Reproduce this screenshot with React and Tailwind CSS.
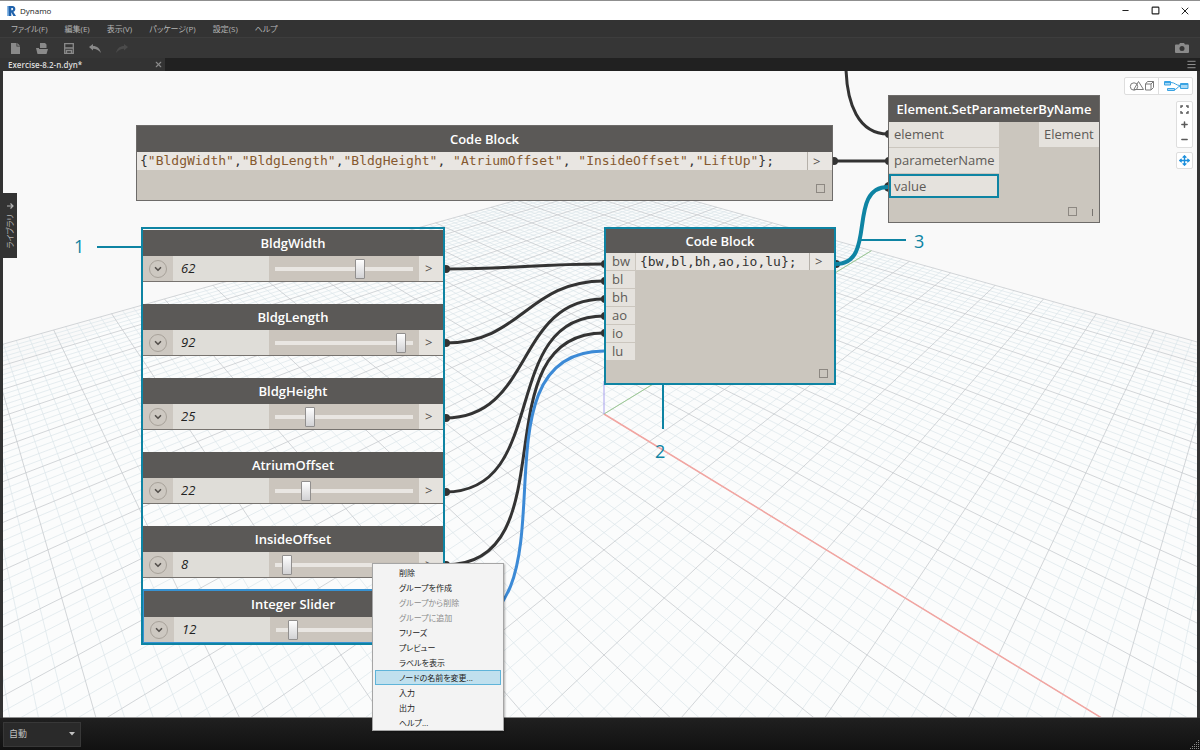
import React from 'react';
import { ChevronDown, Menu, Minus, Move, Plus, Square, X } from 'lucide-react';

const MENUS = ['ファイル(F)', '編集(E)', '表示(V)', 'パッケージ(P)', '設定(S)', 'ヘルプ'];

const SLIDERS = [
  { name: 'BldgWidth', value: 62 },
  { name: 'BldgLength', value: 92 },
  { name: 'BldgHeight', value: 25 },
  { name: 'AtriumOffset', value: 22 },
  { name: 'InsideOffset', value: 8 },
];

const CONTEXT_MENU = [
  { label: '削除' },
  { label: 'グループを作成' },
  { label: 'グループから削除', disabled: true },
  { label: 'グループに追加', disabled: true },
  { label: 'フリーズ' },
  { label: 'プレビュー' },
  { label: 'ラベルを表示' },
  { label: 'ノードの名前を変更...', active: true },
  { label: '入力' },
  { label: '出力' },
  { label: 'ヘルプ...' },
];

const INPUTS = ['bw', 'bl', 'bh', 'ao', 'io', 'lu'];
const PARAMS = ['BldgWidth', 'BldgLength', 'BldgHeight', 'AtriumOffset', 'InsideOffset', 'LiftUp'];

// Ground plane, u along the red axis and v along the green one
const ORIGIN = { x: 601, y: 343 };
const depth = (u, v) => 1 - 0.05894 * (u - v);
const project = (u, v) => {
  const w = depth(u, v);
  return `${(ORIGIN.x + (42.5 * (u + v)) / w).toFixed(1)} ${(ORIGIN.y + (25.96 * (u - v)) / w).toFixed(1)}`;
};

const gridPath = (major) => {
  let d = '';
  for (let i = -50; i <= 50; i++) {
    if ((i % 5 === 0) !== major) continue;
    const c = i / 5;
    // stop before the camera plane
    d += `M${project(-10, c)}L${project(Math.min(10, 14.5 + c), c)}`;
    d += `M${project(c, 10)}L${project(c, Math.max(-10, c - 14.5))}`;
  }
  return d;
};

const wire = (x1, y1, x2, y2) => {
  const k = 0.45 * Math.hypot(x2 - x1, y2 - y1);
  return `M${x1} ${y1}C${x1 + k} ${y1} ${x2 - k} ${y2} ${x2} ${y2}`;
};

const WIRES = [
  [442, 198, 601, 193],
  [442, 272, 601, 210],
  [442, 347, 601, 228],
  [442, 421, 601, 245],
  [442, 494, 601, 262],
  [830, 90, 885, 90],
];

const Scene = () => (
  <svg className="absolute inset-0 w-full h-full" fill="none" aria-hidden="true">
    <path d={`M${project(-10, 10)}L${project(4, 10)}L${project(8, 8)}L${project(8, -6)}L${project(6, -8)}L${project(-8, -8)}L${project(-10, -4)}Z`} fill="#fbfcfc" />
    <path d={gridPath(false)} stroke="#dbe5ea" strokeWidth="1" strokeOpacity="0.7" />
    <path d={gridPath(true)} stroke="#c4c8cc" strokeWidth="1" strokeOpacity="0.75" />
    <path d={`M${project(0, 0)}L${project(9, 0)}`} stroke="#f2a5a1" strokeWidth="1.5" />
    <path d={`M${project(0, 0)}L${project(0, 10)}`} stroke="#9ccb94" strokeWidth="1" />
    <path d="M601 343V310" stroke="#a8a0ee" strokeWidth="1" />

    <g stroke="#333333" strokeWidth="3">
      {WIRES.map((w) => (
        <path key={w.join()} d={wire(...w)} />
      ))}
      <path d="M843 -2C844 32 855 63 885 63" />
    </g>
    <path d={wire(442, 559, 601, 280)} stroke="#3c8ad6" strokeWidth="3" />
    <g fill="#333333">
      {WIRES.map(([x1, y1, x2, y2]) => (
        <React.Fragment key={`${x1}-${y1}-${y2}`}>
          <circle cx={x1 + 1} cy={y1} r="4" />
          <circle cx={x2 + 1} cy={y2} r="4" />
        </React.Fragment>
      ))}
      <circle cx="886" cy="63" r="4" />
      <circle cx="886" cy="116" r="5" />
      <circle cx="833" cy="193" r="4" />
    </g>
    <path d={wire(833, 193, 885, 116)} stroke="#0e84a3" strokeWidth="4" />
    <path d="M94 176H138M660 313V358M857 169H903" stroke="#0e84a3" strokeWidth="2" />
  </svg>
);

const NodeTitle = ({ compact, children }) => (
  <h3
    className={`shrink-0 bg-[#5b5957] text-white text-[13px] font-semibold text-center whitespace-nowrap ${
      compact ? 'h-6 leading-6' : 'h-[26px] leading-[26px]'
    }`}
  >
    {children}
  </h3>
);

const ChevronButton = ({ label }) => (
  <button aria-label={label} className="w-[30px] flex items-center justify-center bg-[#cdc8c1]">
    <span className="w-[18px] h-[18px] rounded-full border border-[#a8a29a] flex items-center justify-center">
      <ChevronDown size={10} strokeWidth={4} className="text-[#55514d]" />
    </span>
  </button>
);

const SliderNode = ({ name, value, selected }) => (
  <div className={selected ? 'border border-t-2 border-[#3792d2]' : 'border-b border-[#77736f]'}>
    <NodeTitle>{name}</NodeTitle>
    <div className="flex h-[25px] bg-[#cbc5bd]">
      <ChevronButton label={`${name} settings`} />
      <input
        aria-label={`${name} value`}
        defaultValue={value}
        className="w-24 min-w-0 pl-2 bg-[#dfddd8] text-[13px] italic text-[#222] outline-none"
      />
      <div className="flex-1 min-w-0 grid items-center">
        <div className="col-start-1 row-start-1 h-1 mx-1.5 bg-[#e9e6e2]" />
        <input
          type="range"
          aria-label={name}
          min="0"
          max="100"
          defaultValue={value}
          className="col-start-1 row-start-1 min-w-0 w-auto mx-0.5 h-5 appearance-none bg-transparent [&::-webkit-slider-thumb]:appearance-none [&::-webkit-slider-thumb]:w-2.5 [&::-webkit-slider-thumb]:h-5 [&::-webkit-slider-thumb]:rounded-[1px] [&::-webkit-slider-thumb]:border [&::-webkit-slider-thumb]:border-[#918f8e] [&::-webkit-slider-thumb]:bg-linear-to-b [&::-webkit-slider-thumb]:from-white [&::-webkit-slider-thumb]:to-[#d2d2d4]"
        />
      </div>
      <span className="w-6 pl-1.5 bg-[#e5e2dd] text-[13px] leading-[25px] text-[#55514d]">&gt;</span>
    </div>
  </div>
);

const PreviewBox = () => <span className="block w-[9px] h-[9px] border border-[#8d8882]" />;

const Port = ({ children }) => (
  <li className="h-[25px] px-[5px] mb-px bg-[#e5e2dd] leading-6 text-[#5d5a57]">{children}</li>
);

const ViewButton = ({ label, className = '', children }) => (
  <button aria-label={label} className={`flex items-center justify-center ${className}`}>
    {children}
  </button>
);

const Canvas = () => (
  <div className="absolute inset-0 overflow-hidden bg-[#f9f9f9]">
    <Scene />

    {/* Parameter names */}
    <section className="absolute left-[133px] top-[54px] w-[697px] h-[76px] border border-[#6d6b69] bg-[#cbc6be] flex flex-col">
      <NodeTitle>Code Block</NodeTitle>
      <div className="flex h-[18px] bg-[#e9e6e2]">
        <code className="flex-1 pl-[3px] font-['DejaVu_Sans_Mono',monospace] text-[13px] leading-[18px] text-[#333] whitespace-pre">
          {'{'}
          {PARAMS.map((p, i) => (
            <React.Fragment key={p}>
              {i > 0 && (i === 3 || i === 4 ? ', ' : ',')}
              <span className="text-[#85592f]">{`"${p}"`}</span>
            </React.Fragment>
          ))}
          {'};'}
        </code>
        <span className="w-[25px] border-l border-[#b5b0a9] pl-[5px] text-[13px] leading-[18px] text-[#55514d]">&gt;</span>
      </div>
      <div className="flex-1 flex items-end justify-end p-[7px]">
        <PreviewBox />
      </div>
    </section>

    {/* Slider group */}
    <section className="absolute left-[138px] top-[156px] w-[304px] pt-px border-2 border-[#0e84a3]">
      <div className="flex flex-col gap-[22px] mb-[11px]">
        {SLIDERS.map((s) => (
          <SliderNode key={s.name} {...s} />
        ))}
      </div>
      <SliderNode name="Integer Slider" value={12} selected />
    </section>

    {/* List of values */}
    <section className="absolute left-[601px] top-[156px] w-[232px] h-[158px] border-2 border-[#0e84a3] bg-[#cbc6be]">
      <NodeTitle compact>Code Block</NodeTitle>
      <div className="flex">
        <ul className="w-[29px]">
          {INPUTS.map((name) => (
            <li key={name} className="h-[17px] mb-px pl-1.5 bg-[#e5e2dd] text-[13px] leading-[17px] text-[#5d5a57]">{name}</li>
          ))}
        </ul>
        <div className="flex-1 flex h-[17px] ml-px bg-[#e9e6e2]">
          <code className="flex-1 pl-1 font-['DejaVu_Sans_Mono',monospace] text-[13px] leading-[17px] text-[#333] whitespace-pre">{'{bw,bl,bh,ao,io,lu};'}</code>
          <span className="w-[25px] border-l border-[#b5b0a9] pl-[5px] text-[13px] leading-[17px] text-[#55514d]">&gt;</span>
        </div>
      </div>
      <div className="absolute right-1.5 bottom-[5px]">
        <PreviewBox />
      </div>
    </section>

    {/* Element.SetParameterByName */}
    <section className="absolute left-[885px] top-6 w-[212px] h-32 border border-[#6d6b69] bg-[#cbc6be] text-[13px]">
      <NodeTitle>Element.SetParameterByName</NodeTitle>
      <div className="flex justify-between items-start">
        <ul className="w-[110px]">
          <Port>element</Port>
          <Port>parameterName</Port>
          <li className="h-6 px-[3px] border-2 border-[#0e84a3] bg-[#e5e2dd] leading-5 text-[#5d5a57]">value</li>
        </ul>
        <ul className="w-[60px]">
          <Port>Element</Port>
        </ul>
      </div>
      <div className="absolute right-1.5 bottom-1.5 flex items-end gap-[15px]">
        <PreviewBox />
        <span className="w-px h-[7px] bg-[#77736f]" />
      </div>
    </section>

    {/* Callouts */}
    <div className="font-['Open_Sans',sans-serif] text-lg leading-6 text-[#0e84a3]">
      <span className="absolute left-[71px] top-[163px]">1</span>
      <span className="absolute left-[652px] top-[368px]">2</span>
      <span className="absolute left-[911px] top-[158px]">3</span>
    </div>

    {/* Library tab */}
    <button className="absolute left-0 top-[122px] w-3.5 h-[65px] bg-[#333] text-[#b4b4b4] flex flex-col items-center justify-center gap-1">
      <svg width="8" height="8" viewBox="0 0 8 8" fill="none" stroke="currentColor" strokeWidth="1.2">
        <path d="M1 4H7M4.5 1.5L7 4L4.5 6.5" />
      </svg>
      <span className="[writing-mode:sideways-lr] text-[8px] leading-3 [font-feature-settings:'palt']">ライブラリ</span>
    </button>

    {/* View controls */}
    <div className="absolute right-1 top-1.5 flex flex-col items-end gap-1 text-[#5a5a5a]">
      <div className="flex w-[69px] h-[18px] rounded-xs border border-[#dedede] bg-white mb-0.5">
        <ViewButton label="Geometry view" className="flex-1 border-r border-[#dedede]">
          <svg width="26" height="12" viewBox="0 0 26 12" fill="none" stroke="#7a7a7a" strokeWidth="1">
            <circle cx="5" cy="6.5" r="3.7" />
            <path d="M9.500 1.500L14.500 9.500H4.800Z" />
            <path d="M16.500 4H22V10H16.500ZM16.500 4L18.500 1.500H24.500L22 4M24.500 1.500V7.500L22 10" />
          </svg>
        </ViewButton>
        <ViewButton label="Graph view" className="flex-1">
          <svg width="26" height="12" viewBox="0 0 26 12" fill="none" stroke="#3aa3e3" strokeWidth="1">
            <path d="M1.500 1.500H7.500V5H1.500ZM1.500 2.500H7.500" fill="#a9d9f5" />
            <path d="M4.500 8.500H11.500V10.500H4.500Z" fill="#a9d9f5" />
            <path d="M17.500 3.500H25V8.500H17.500ZM17.500 4.500H25" fill="#a9d9f5" />
            <path d="M8 2.500C12 2.500 13 5.500 17 5.500M12 9.500C14 9.500 14 6.500 17 6.500" />
          </svg>
        </ViewButton>
      </div>
      <div className="flex flex-col w-[17px] h-[47px] rounded-xs border border-[#dedede] bg-white">
        <ViewButton label="Zoom to fit" className="flex-1">
          <svg width="9" height="9" viewBox="0 0 9 9" fill="none" stroke="currentColor" strokeWidth="1.4">
            <path d="M1 3V1H3M6 1H8V3M8 6V8H6M3 8H1V6" />
          </svg>
        </ViewButton>
        <ViewButton label="Zoom in" className="flex-1"><Plus size={9} strokeWidth={4} /></ViewButton>
        <ViewButton label="Zoom out" className="flex-1"><Minus size={9} strokeWidth={4} /></ViewButton>
      </div>
      <ViewButton label="Pan" className="w-[17px] h-[17px] rounded-xs border border-[#dedede] bg-white text-[#1c8fdc]">
        <Move size={11} strokeWidth={3} />
      </ViewButton>
    </div>
  </div>
);

const ContextMenu = () => (
  <ul
    role="menu"
    className="absolute left-[369px] top-[492px] w-[132px] px-0.5 pt-px border border-[#a5a5a5] bg-[#f3f3f3] shadow-[1px_1px_2px_rgba(0,0,0,0.3)]"
  >
    {CONTEXT_MENU.map((item) => (
      <li key={item.label} role="none">
        <button
          role="menuitem"
          disabled={item.disabled}
          className={`block w-full h-[15px] pl-[23px] text-left text-[8px] leading-3 border whitespace-nowrap [font-feature-settings:'palt'] ${
            item.active ? 'bg-[#c0e0ee] border-[#5fb4d9]' : 'border-transparent'
          } ${item.disabled ? 'text-[#8c8c8c]' : 'text-[#222]'}`}
        >
          {item.label}
        </button>
      </li>
    ))}
  </ul>
);

const App = () => (
  <div className="h-screen flex flex-col bg-[#333] font-['Open_Sans','Noto_Sans_CJK_JP',sans-serif]">
    {/* Title bar */}
    <header className="h-5 shrink-0 flex items-center bg-white border-t border-[#8f8f8f] pl-[7px] text-[#222]">
      <svg width="9" height="10" viewBox="0 0 9 10" aria-hidden="true">
        <path d="M0 0H5L3 10H0Z" fill="#8ab8e4" />
        <path d="M1.500 0H5.500C9 0 9.200 5 6.300 5.700L9 10H6.300L4.300 6.200V10H1.800Z" fill="#1f62ac" />
        <path d="M4.300 2H5.300C6.400 2 6.400 4.200 5.300 4.200H4.300Z" fill="#fff" />
      </svg>
      <h1 className="ml-1 text-[8px] leading-4">Dynamo</h1>
      <div className="ml-auto flex items-center">
        <button aria-label="Minimize" className="w-[30px] flex justify-center"><Minus size={9} strokeWidth={3} /></button>
        <button aria-label="Maximize" className="w-[30px] flex justify-center"><Square size={9} strokeWidth={3} /></button>
        <button aria-label="Close" className="w-[30px] flex justify-center"><X size={12} strokeWidth={2} /></button>
      </div>
    </header>

    {/* Menu bar */}
    <nav className="h-[17px] shrink-0 flex items-center gap-[17px] pl-[11px] text-[8px] leading-3 text-[#b5b5b5] [font-feature-settings:'palt']">
      {MENUS.map((m) => (
        <button key={m} className="whitespace-nowrap">{m}</button>
      ))}
    </nav>

    {/* Toolbar */}
    <div className="h-[21px] shrink-0 flex items-center bg-[#363636] border-t border-[#3d3d3d] pl-[9px] pr-[11px] text-[#8a8a8a]">
      <button aria-label="New" className="w-[26px] pl-0.5">
        <svg width="9" height="11" viewBox="0 0 9 11" fill="currentColor"><path d="M0 0H5.500V3.500H9V11H0ZM6.300 0L9 2.700H6.300Z" /></svg>
      </button>
      <button aria-label="Open" className="w-[27px] pl-px">
        <svg width="12" height="11" viewBox="0 0 12 11" fill="currentColor"><path d="M4 0H9L10.500 1.500V5H4ZM0 5H3V6H12L10.500 11H1.500Z" /></svg>
      </button>
      <button aria-label="Save" className="w-[27px] pl-0.5">
        <svg width="10" height="11" viewBox="0 0 10 11" fill="none" stroke="currentColor" strokeWidth="1.300"><path d="M0.700 0.700H9.300V10.300H0.700ZM0.700 5H9.300M2.500 10V7.500H7.500V10" /></svg>
      </button>
      <button aria-label="Undo" className="w-[27px]">
        <svg width="12" height="9" viewBox="0 0 12 9" fill="currentColor"><path d="M0 3L4 0V2C8 2 11 4.500 12 9C9.500 6 7 4.800 4 4.800V6.500Z" /></svg>
      </button>
      <button aria-label="Redo" disabled className="text-[#4b4b4b]">
        <svg width="12" height="9" viewBox="0 0 12 9" fill="currentColor"><path d="M12 3L8 0V2C4 2 1 4.500 0 9C2.500 6 5 4.800 8 4.800V6.500Z" /></svg>
      </button>
      <button aria-label="Export image" className="ml-auto">
        <svg width="14" height="10" viewBox="0 0 14 10">
          <path d="M1 1.500H4L5 0H9L10 1.500H13Q14 1.500 14 2.500V9Q14 10 13 10H1Q0 10 0 9V2.500Q0 1.500 1 1.500Z" fill="currentColor" />
          <circle cx="7" cy="5.500" r="2.500" fill="#363636" />
        </svg>
      </button>
    </div>

    {/* Workspace tabs */}
    <div className="h-[13px] shrink-0 flex bg-[#212121] pr-[3px]">
      <div className="w-[165px] flex items-center justify-between pl-2 pr-0.5 bg-[#333] text-[#dcdcdc]">
        <span className="text-[8px] leading-3 font-semibold">Exercise-8.2-n.dyn*</span>
        <button aria-label="Close tab" className="text-[#8a8a8a]"><X size={9} strokeWidth={3} /></button>
      </div>
      <button aria-label="Tab list" className="ml-auto text-[#9a9a9a]"><Menu size={11} strokeWidth={2} /></button>
    </div>

    <main className="flex-1 min-h-0 relative mx-[3px] border-b border-[#8f8f8f]">
      <Canvas />
      <ContextMenu />
    </main>

    {/* Run bar */}
    <footer className="h-8 shrink-0 flex items-center justify-between pl-[3px] bg-linear-to-b from-[#202020] to-[#111] text-[#c2c2c2]">
      <div className="grid items-center">
        <select aria-label="実行モード" className="col-start-1 row-start-1 w-[78px] h-[25px] pl-[5px] appearance-none border border-[#383838] bg-[#2a2a2a] text-[9px] outline-none">
          <option>自動</option>
        </select>
        <svg width="6" height="4" viewBox="0 0 6 4" className="col-start-1 row-start-1 justify-self-end mr-1.5 pointer-events-none" fill="currentColor"><path d="M0 0H6L3 3.500Z" /></svg>
      </div>
      <svg width="10" height="10" viewBox="0 0 10 10" className="self-end" fill="#8a8a8a" aria-hidden="true">
        <path d="M8 0H9V1H8ZM6 2H7V3H6ZM8 2H9V3H8ZM4 4H5V5H4ZM6 4H7V5H6ZM8 4H9V5H8ZM2 6H3V7H2ZM4 6H5V7H4ZM6 6H7V7H6ZM8 6H9V7H8ZM0 8H1V9H0ZM2 8H3V9H2ZM4 8H5V9H4ZM6 8H7V9H6ZM8 8H9V9H8Z" />
      </svg>
    </footer>
  </div>
);

export default App;
